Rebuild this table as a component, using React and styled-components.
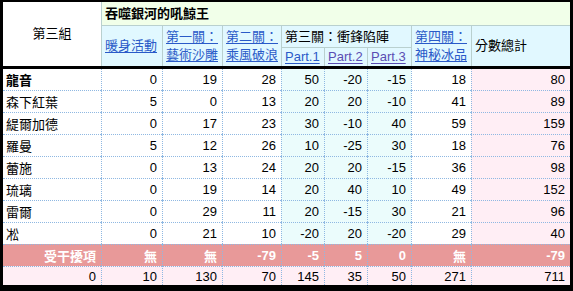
import React from "react";
import styled, { createGlobalStyle, css } from "styled-components";

const Global = createGlobalStyle`
  html, body { margin: 0; padding: 0; background: #000; }
  body { width: 573px; height: 291px; overflow: hidden; }
`;

const COLS = "98px 61px 60px 59px 43px 43px 44px 60px 99px";

const Frame = styled.div`
  margin: 2px 0 0 3px;
  width: 567px;
  height: 283px;
  overflow: hidden;
  font-family: "Liberation Sans", "Noto Sans CJK TC", sans-serif;
  font-size: 13px;
  color: #000;
  background: #fff;
`;

const HeadGrid = styled.div`
  display: grid;
  grid-template-columns: ${COLS};
  grid-template-rows: 23px 22px 19px;
  border-bottom: 3px solid #000;
`;

const BodyGrid = styled.div`
  display: grid;
  grid-template-columns: ${COLS};
  grid-template-rows: 21px repeat(8, 22px) 19px;
`;

const HeadCell = styled.div`
  box-sizing: border-box;
  grid-column: ${(p) => p.$c} / span ${(p) => p.$cs || 1};
  grid-row: ${(p) => p.$r} / span ${(p) => p.$rs || 1};
  border-left: ${(p) => (p.$c > 1 ? "1px solid #b9d0cf" : "none")};
  border-top: ${(p) => (p.$r > 1 ? "1px solid #b9d0cf" : "none")};
  background: ${(p) => p.$bg};
  display: flex;
  flex-direction: column;
  justify-content: center;
  align-items: ${(p) => (p.$center ? "center" : "flex-start")};
  padding: 0 3px;
  line-height: 18px;
  font-weight: ${(p) => (p.$bold ? "bold" : "normal")};
  white-space: nowrap;
`;

const Link = styled.span`
  color: ${(p) => (p.$visited ? "#5a4db3" : "#2a5ac8")};
  text-decoration: underline;
  text-underline-offset: 2px;
`;

const Cell = styled.div`
  box-sizing: border-box;
  border-left: ${(p) => (p.$c > 1 ? "1px dotted #8fb8e2" : "none")};
  border-top: ${(p) => (p.$r > 1 ? "1px dotted #8fb8e2" : "none")};
  background: ${(p) => p.$bg};
  display: flex;
  align-items: center;
  justify-content: ${(p) => (p.$left ? "flex-start" : "flex-end")};
  padding: ${(p) => (p.$left ? "0 3px" : "0 5px 0 3px")};
  white-space: nowrap;
  font-weight: ${(p) => (p.$bold ? "bold" : "normal")};
  ${(p) =>
    p.$alert &&
    css`
      color: #fff;
      font-weight: bold;
    `}
`;

const WHITE = "#ffffff";
const CYAN_H = "#e1f8ff";
const GREEN = "#f1ffe9";
const CYAN_D = "#ebfcfc";
const PINK = "#ffeef5";
const SALMON = "#e89999";

const colBg = [WHITE, WHITE, WHITE, WHITE, CYAN_D, CYAN_D, CYAN_D, WHITE, PINK];

const players = [
  ["龍音", [0, 19, 28, 50, -20, -15, 18, 80], true],
  ["森下紅葉", [5, 0, 13, 20, 20, -10, 41, 89]],
  ["緹爾加德", [0, 17, 23, 30, -10, 40, 59, 159]],
  ["羅曼", [5, 12, 26, 10, -25, 30, 18, 76]],
  ["蕾施", [0, 13, 24, 20, 20, -15, 36, 98]],
  ["琉璃", [0, 19, 14, 20, 40, 10, 49, 152]],
  ["雷爾", [0, 29, 11, 20, -15, 30, 21, 96]],
  ["凇", [0, 21, 10, -20, 20, -20, 29, 40]],
];

const penalty = ["受干擾項", "無", "無", "-79", "-5", "5", "0", "無", "-79"];
const totals = [0, 10, 130, 70, 145, 35, 50, 271, 711];

function TwoLine({ a, b }) {
  return (
    <>
      <Link>{a}</Link>
      <Link>{b}</Link>
    </>
  );
}

export default function App() {
  return (
    <>
      <Global />
      <Frame>
        <HeadGrid>
          <HeadCell $c={1} $r={1} $rs={3} $bg={WHITE} $center>
            第三組
          </HeadCell>
          <HeadCell $c={2} $cs={8} $r={1} $bg={GREEN} $bold>
            吞噬銀河的吼鯨王
          </HeadCell>
          <HeadCell $c={2} $r={2} $rs={2} $bg={CYAN_H}>
            <Link>暖身活動</Link>
          </HeadCell>
          <HeadCell $c={3} $r={2} $rs={2} $bg={CYAN_H}>
            <TwoLine a="第一關：" b="藝術沙雕" />
          </HeadCell>
          <HeadCell $c={4} $r={2} $rs={2} $bg={CYAN_H}>
            <TwoLine a="第二關：" b="乘風破浪" />
          </HeadCell>
          <HeadCell $c={5} $cs={3} $r={2} $bg={CYAN_H}>
            第三關：衝鋒陷陣
          </HeadCell>
          <HeadCell $c={8} $r={2} $rs={2} $bg={CYAN_H}>
            <TwoLine a="第四關：" b="神秘冰品" />
          </HeadCell>
          <HeadCell $c={9} $r={2} $rs={2} $bg={CYAN_H}>
            分數總計
          </HeadCell>
          <HeadCell $c={5} $r={3} $bg={CYAN_H}>
            <Link>Part.1</Link>
          </HeadCell>
          <HeadCell $c={6} $r={3} $bg={CYAN_H}>
            <Link $visited>Part.2</Link>
          </HeadCell>
          <HeadCell $c={7} $r={3} $bg={CYAN_H}>
            <Link $visited>Part.3</Link>
          </HeadCell>
        </HeadGrid>
        <BodyGrid>
          {players.map(([name, vals, bold], i) => (
            <React.Fragment key={name}>
              <Cell $c={1} $r={i + 1} $bg={WHITE} $left $bold={bold}>
                {name}
              </Cell>
              {vals.map((v, j) => (
                <Cell key={j} $c={j + 2} $r={i + 1} $bg={colBg[j + 1]}>
                  {v}
                </Cell>
              ))}
            </React.Fragment>
          ))}
          {penalty.map((v, j) => (
            <Cell key={"p" + j} $c={j + 1} $r={9} $bg={SALMON} $alert>
              {v}
            </Cell>
          ))}
          {totals.map((v, j) => (
            <Cell key={"t" + j} $c={j + 1} $r={10} $bg={PINK}>
              {v}
            </Cell>
          ))}
        </BodyGrid>
      </Frame>
    </>
  );
}
